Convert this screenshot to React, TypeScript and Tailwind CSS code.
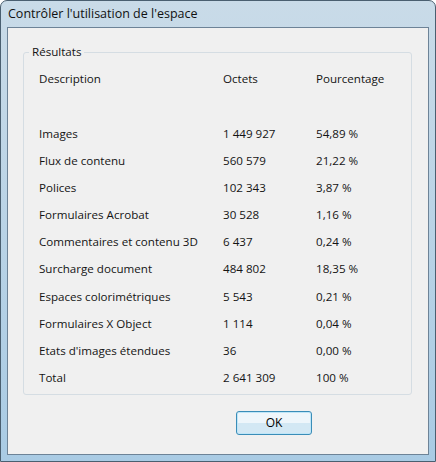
const rows: [string, string, string][] = [
  ["Images", "1 449 927", "54,89 %"],
  ["Flux de contenu", "560 579", "21,22 %"],
  ["Polices", "102 343", "3,87 %"],
  ["Formulaires Acrobat", "30 528", "1,16 %"],
  ["Commentaires et contenu 3D", "6 437", "0,24 %"],
  ["Surcharge document", "484 802", "18,35 %"],
  ["Espaces colorimétriques", "5 543", "0,21 %"],
  ["Formulaires X Object", "1 114", "0,04 %"],
  ["Etats d'images étendues", "36", "0,00 %"],
  ["Total", "2 641 309", "100 %"],
];

function Row({ cells }: { cells: string[] }) {
  return (
    <div className="flex h-[27.1px] items-center">
      <div className="w-[184px]">{cells[0]}</div>
      <div className="w-[93px]">{cells[1]}</div>
      <div>{cells[2]}</div>
    </div>
  );
}

export default function App() {
  return (
    <div
      className="w-[436px] h-[462px] bg-white"
      style={{ fontFamily: '"Open Sans", "Noto Sans", sans-serif' }}
    >
      <div className="flex h-full w-full flex-col rounded-t-[7px] border border-[#4a5f70] bg-gradient-to-b from-[#c9dbe8] via-[#b9d3e6] to-[#a9cbe4] px-[6px] pb-[6px]">
        {/* title bar */}
        <div className="flex h-[26px] items-center pl-[1px] text-[12.5px] text-[#111]">
          Contrôler l'utilisation de l'espace
        </div>

        {/* client area */}
        <div className="flex flex-1 flex-col border border-[#6d8397] bg-[#f0f0f0] text-[11.6px] text-[#141414]">
          <div className="relative ml-[15px] mr-[16px] mt-[24px] rounded-[3px] border border-[#d5dde3] pl-[15px] pt-[12px] pb-[3px]">
            <div className="absolute -top-[10px] left-[5px] bg-[#f0f0f0] px-[3px]">Résultats</div>
            <Row cells={["Description", "Octets", "Pourcentage"]} />
            <div className="h-[28px]" />
            {rows.map((r) => (
              <Row key={r[0]} cells={r} />
            ))}
          </div>

          <div className="mt-[16px] flex pl-[228px]">
            <button className="flex h-[24px] w-[76px] items-center justify-center rounded-[3px] border border-[#3a8db8] bg-gradient-to-b from-[#eef6fb] from-50% to-[#d3e8f4] to-50% text-[12px] text-black shadow-[inset_0_0_0_1px_#bfe6f8]">
              OK
            </button>
          </div>
        </div>
      </div>
    </div>
  );
}
